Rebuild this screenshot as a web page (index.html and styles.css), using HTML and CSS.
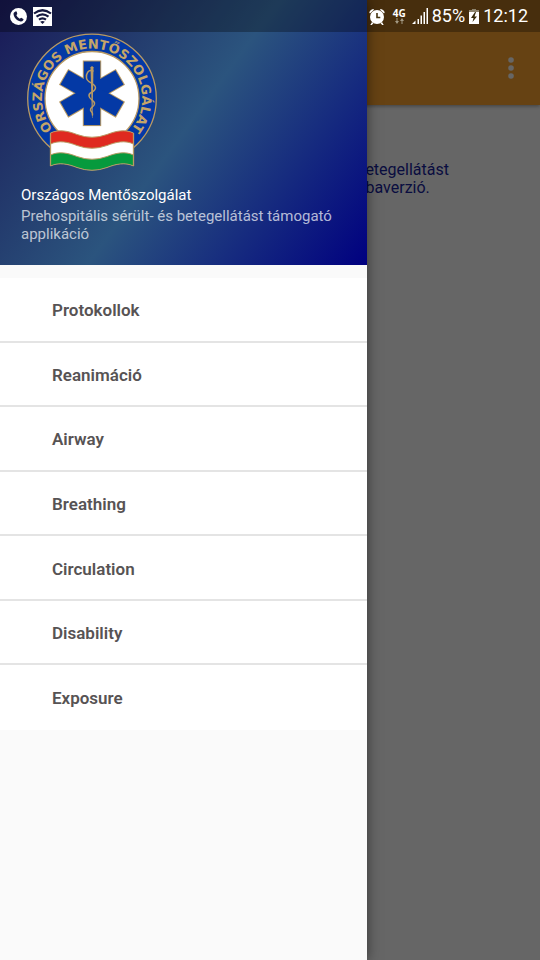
FILE: index.html
```html
<!DOCTYPE html>
<html lang="hu">
<head>
<meta charset="utf-8">
<meta name="viewport" content="width=device-width, initial-scale=1">
<title>Országos Mentőszolgálat</title>
<link rel="stylesheet" href="styles.css">
</head>
<body>
<div class="app">
  <div class="page">
    <header class="toolbar">
      <button class="more" type="button" aria-label="Menü">
        <svg width="6" height="22" viewBox="0 0 6 22" fill="#fff"><circle cx="3" cy="3" r="2.8"/><circle cx="3" cy="11" r="2.8"/><circle cx="3" cy="19" r="2.8"/></svg>
      </button>
    </header>
    <main class="intro">
      <p>betegellátást<br>óbaverzió.</p>
    </main>
  </div>
  <div class="scrim"></div>

  <aside class="drawer">
    <div class="profile">
      <svg class="logo" width="132" height="140" viewBox="26 32 132 140" aria-hidden="true">
        <defs>
          <path id="ring" d="M92 148.500A50 50 0 0 1 92 48.500A50 50 0 0 1 92 148.500"/>
        </defs>
        <circle cx="92" cy="98.500" r="64.300" fill="#0439a5" stroke="#b99a63" stroke-width="1.300"/>
        <circle cx="92" cy="98.500" r="47" fill="#fff" stroke="#b99a63" stroke-width="1.300"/>
        <text class="ring-text"><textPath href="#ring" startOffset="50%">ORSZÁGOS MENTŐSZOLGÁLAT</textPath></text>
        <g fill="#0439a5" stroke="#b99a63" stroke-width="2">
          <rect x="83.800" y="61.500" width="16.400" height="63.600"/>
          <rect x="83.800" y="61.500" width="16.400" height="63.600" transform="rotate(60 92 93.300)"/>
          <rect x="83.800" y="61.500" width="16.400" height="63.600" transform="rotate(-60 92 93.300)"/>
        </g>
        <g fill="#0439a5">
          <rect x="83.800" y="61.500" width="16.400" height="63.600"/>
          <rect x="83.800" y="61.500" width="16.400" height="63.600" transform="rotate(60 92 93.300)"/>
          <rect x="83.800" y="61.500" width="16.400" height="63.600" transform="rotate(-60 92 93.300)"/>
        </g>
        <g fill="none" stroke="#b99a63" stroke-linecap="round">
          <path d="M90.500 67h3l-1 51h-.5z" fill="#b99a63" stroke="none"/>
          <circle cx="92" cy="67.500" r="1.200" fill="#b99a63" stroke="none"/>
          <path d="M93 71C88 69 86 74 86.500 78C87 83 95.500 83 95.500 88C95 93 88.500 91 89 96C89.500 100 95 100 94.500 104C94 107 90 107 90.500 110C91 112 93 112 92.500 115" stroke-width="1.500"/>
        </g>
        <path d="M50.500 133C59 129 68 131 77 134.500Q92 140 107 134.500C116 131 125 129 133.500 133V166C125 162 116 164 107 167.500Q92 173 77 167.500C68 164 59 162 50.500 166z" fill="#fff"/>
        <path d="M50.500 133C59 129 68 131 77 134.500Q92 140 107 134.500C116 131 125 129 133.500 133V144C125 140 116 142 107 145.500Q92 151 77 145.500C68 142 59 140 50.500 144z" fill="#df2a20" stroke="#b99a63"/>
        <path d="M50.500 155C59 151 68 153 77 156.500Q92 162 107 156.500C116 153 125 151 133.500 155V166C125 162 116 164 107 167.500Q92 173 77 167.500C68 164 59 162 50.500 166z" fill="#069a3d" stroke="#b99a63"/>
        <path d="M50.500 133V166M133.500 133V166" stroke="#b99a63" stroke-width="1.300"/>
      </svg>
      <h1 class="name">Országos Mentőszolgálat</h1>
      <p class="tagline">Prehospitális sérült- és betegellátást támogató applikáció</p>
    </div>
    <nav>
      <ul class="menu">
        <li><a href="#protokollok">Protokollok</a></li>
        <li><a href="#reanimacio">Reanimáció</a></li>
        <li><a href="#airway">Airway</a></li>
        <li><a href="#breathing">Breathing</a></li>
        <li><a href="#circulation">Circulation</a></li>
        <li><a href="#disability">Disability</a></li>
        <li><a href="#exposure">Exposure</a></li>
      </ul>
    </nav>
  </aside>

  <div class="status">
    <div class="status-left">
      <svg width="17" height="17" viewBox="0 0 17 17"><circle cx="8.500" cy="8.500" r="8.500" fill="#fff"/><path d="M4.300 4.200L6 3.200Q6.500 3.200 6.800 4L7.300 6Q7.200 6.500 6.300 7Q7.200 9.500 9.700 10.800L10.800 9.900Q11.200 9.700 11.600 9.900L13.300 11Q13.700 11.400 13.400 11.900Q12.300 13.600 10.600 13.500C6.800 12.800 3.900 9.300 3.500 6Q3.500 4.800 4.300 4.200z" fill="#15183f"/></svg>
      <svg width="19" height="19" viewBox="0 0 19 19"><path d="M0 0h19v19H0z" fill="#fff"/><g fill="none" stroke="#15183f" stroke-width="2.200"><path d="M1 6.500Q9.500 0 18 6.500M3.500 9.700Q9.500 5 15.500 9.700M6 12.700Q9.500 10 13 12.700"/></g><path d="M7.200 14.800Q9.500 13.300 11.800 14.800L9.500 17z" fill="#15183f"/></svg>
    </div>
    <div class="status-right">
      <svg width="16" height="17" viewBox="0 0 16 17"><g fill="#fff"><circle cx="8" cy="9" r="7"/><path d="M.3 4.500Q1 1.500 4.300 1L5 1.800L1 5.500zM15.700 4.500Q15 1.500 11.700 1L11 1.800L15 5.500zM3 14l1.500 1.200L2.800 17H1.300zM13 14l-1.500 1.200L13.200 17h1.500z"/></g><path d="M8 5v4.500h3.300" fill="none" stroke="#46340f" stroke-width="1.600"/></svg>
      <div class="network">
        <span>4G</span>
        <svg width="9" height="6" viewBox="0 0 9 6" fill="#a39a85"><path d="M1.500 0h1v3H4L2 6L0 3h1.500zM6.500 6h1V3H9L7 0L5 3h1.500z"/></svg>
      </div>
      <svg width="16" height="16" viewBox="0 0 16 16" fill="#fff"><path d="M0 16l3.500-3.500V16zM5.500 11H7v5H5.500zM8.500 7.500H10V16H8.500zM11.500 4H13v12h-1.500zM14.500 0H16v16h-1.500z"/></svg>
      <span class="battery-level">85%</span>
      <svg width="10" height="15" viewBox="0 0 10 15"><path d="M3 0h4v1h3v2H0V1h3z" fill="#8e846e"/><path d="M0 3h10v12H0z" fill="#fff"/><path d="M6 3L2 9h2.500L3.500 13L8 7.500H5.500L7 3z" fill="#382a0b"/></svg>
      <time>12:12</time>
    </div>
  </div>
</div>
</body>
</html>
```
FILE: styles.css
```css
* { box-sizing: border-box; }

body, h1, p, ul { margin: 0; }

body {
  font-family: Roboto, "Liberation Sans", sans-serif;
  font-size: 15px;
  line-height: 18px;
}

svg { display: block; }

.app {
  position: relative;
  min-height: 100vh;
  overflow: hidden;
  background: #fff;
}

.toolbar {
  display: flex;
  justify-content: flex-end;
  padding: 50px 20px 19px;
  background: #ffa530;
  box-shadow: 0 1px 4px rgba(0, 0, 0, 0.4);
}

.more {
  display: flex;
  align-items: center;
  justify-content: center;
  width: 18px;
  height: 36px;
  padding: 0;
  border: 0;
  background: none;
}

.intro {
  padding: 56px 0 0 66%;
  color: #1824a0;
  font-size: 16px;
}

.scrim {
  position: absolute;
  inset: 0;
  background: rgba(0, 0, 0, 0.6);
}

.drawer {
  position: absolute;
  inset: 0 auto 0 0;
  width: 68%;
  background: #fafafa;
  box-shadow: 0 0 12px rgba(0, 0, 0, 0.5);
}

.profile {
  padding: 32px 21px 22px;
  color: #fff;
  background: linear-gradient(126deg, #191956, #2b547e 50%, #000080);
}

.logo { margin: 0 0 14px 5px; }

.ring-text {
  font: bold 13px "DejaVu Sans", sans-serif;
  fill: #c5a568;
  text-anchor: middle;
}

.name {
  font-size: 15px;
  line-height: 18px;
  font-weight: 400;
}

.tagline {
  padding-top: 3px;
  color: rgba(255, 255, 255, 0.7);
}

.menu {
  display: grid;
  grid-auto-rows: 1fr;
  min-height: 452px;
  margin-top: 13px;
  padding: 0;
  list-style: none;
  background: #fff;
}

.menu li {
  display: flex;
  border-bottom: 2px solid #e4e4e4;
}

.menu li:last-child { border-color: transparent; }

.menu a {
  display: flex;
  flex: 1;
  align-items: center;
  padding: 2px 0 0 52px;
  color: #575354;
  font-size: 17px;
  font-weight: 600;
  text-decoration: none;
}

.status {
  position: absolute;
  inset: 0 0 auto;
  display: flex;
  align-items: center;
  justify-content: space-between;
  height: 32px;
  padding: 0 12px 0 10px;
  color: #fff;
  background: rgba(0, 0, 0, 0.3);
}

.status-left,
.status-right {
  display: flex;
  align-items: center;
}

.status-left { gap: 6px; }

.status-right {
  gap: 4px;
  font-size: 18px;
}

.network {
  display: flex;
  flex-direction: column;
  align-items: center;
  margin: 0 2px 0 4px;
  font: bold 10px "Noto Sans", sans-serif;
}

.network span { line-height: 10px; }
```
